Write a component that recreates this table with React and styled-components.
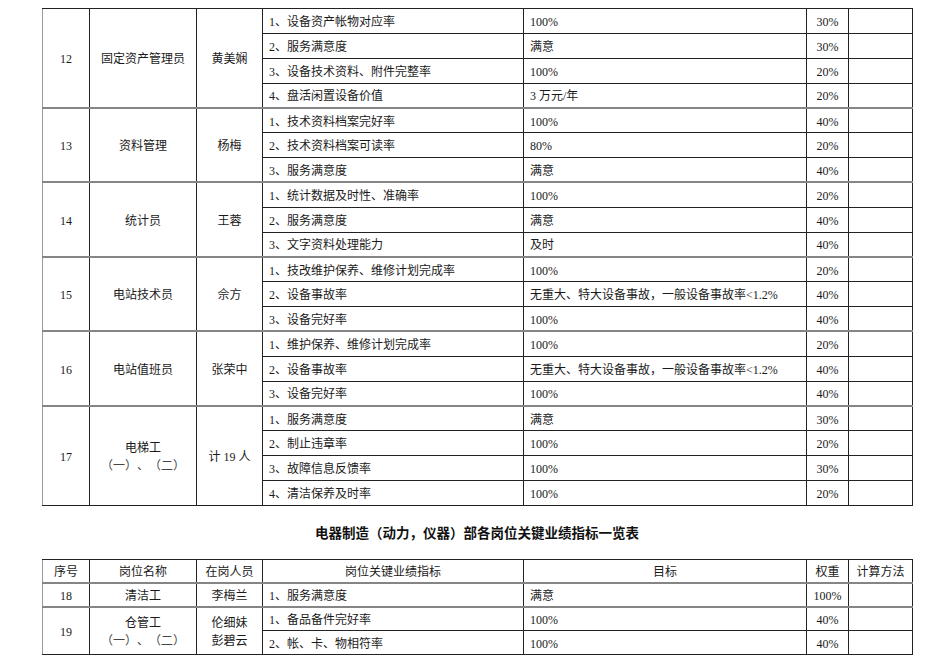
import React from "react";
import styled, { createGlobalStyle } from "styled-components";

const Global = createGlobalStyle`
  html, body { margin: 0; padding: 0; background: #fff; }
  body {
    font-family: "Liberation Serif", "Noto Sans CJK SC", serif;
    color: #1a1a1a;
    text-spacing-trim: space-all;
  }
`;

const Page = styled.div`
  width: 950px;
  padding: 8px 0 0 42px;
  box-sizing: border-box;
`;

const Table = styled.table`
  width: 870px;
  table-layout: fixed;
  border-collapse: collapse;
  font-size: 12px;
  border-left: 1px solid #9a9a9a;
  border-bottom: 1px solid #9a9a9a;
`;

const Row = styled.tr`
  height: ${(p) => p.$h || 24.85}px;
  & > td {
    border-top: ${(p) => (p.$group ? "2px solid #858585" : "1px solid #222")};
  }
`;

const Cell = styled.td`
  border: 1px solid #222;
  padding: 2px 6px 0;
  text-align: ${(p) => (p.$left ? "left" : "center")};
  vertical-align: middle;
  line-height: 1.5;
  white-space: nowrap;
  overflow: hidden;
  &:first-child { border-left: 1px solid #9a9a9a; }
`;

const Sub = styled.span`
  display: block;
  color: ${(p) => (p.$plain ? "#1a1a1a" : "#444")};
  text-spacing-trim: space-all;
`;

const Title = styled.h2`
  margin: 0;
  height: 53px;
  width: 870px;
  display: flex;
  align-items: center;
  justify-content: center;
  font-family: "Noto Sans CJK SC", "Liberation Sans", sans-serif;
  font-size: 13.5px;
  font-weight: 700;
  color: #111;
  text-spacing-trim: space-all;
`;

const Cols = () => (
  <colgroup>
    <col style={{ width: 47 }} />
    <col style={{ width: 107 }} />
    <col style={{ width: 66 }} />
    <col style={{ width: 261 }} />
    <col style={{ width: 283 }} />
    <col style={{ width: 42 }} />
    <col style={{ width: 64 }} />
  </colgroup>
);

const groups = [
  {
    no: "12", name: ["固定资产管理员"], staff: ["黄美娴"],
    items: [
      ["1、设备资产帐物对应率", "100%", "30%"],
      ["2、服务满意度", "满意", "30%"],
      ["3、设备技术资料、附件完整率", "100%", "20%"],
      ["4、盘活闲置设备价值", "3 万元/年", "20%"],
    ],
  },
  {
    no: "13", name: ["资料管理"], staff: ["杨梅"],
    items: [
      ["1、技术资料档案完好率", "100%", "40%"],
      ["2、技术资料档案可读率", "80%", "20%"],
      ["3、服务满意度", "满意", "40%"],
    ],
  },
  {
    no: "14", name: ["统计员"], staff: ["王蓉"],
    items: [
      ["1、统计数据及时性、准确率", "100%", "20%"],
      ["2、服务满意度", "满意", "40%"],
      ["3、文字资料处理能力", "及时", "40%"],
    ],
  },
  {
    no: "15", name: ["电站技术员"], staff: ["佘方"],
    items: [
      ["1、技改维护保养、维修计划完成率", "100%", "20%"],
      ["2、设备事故率", "无重大、特大设备事故，一般设备事故率<1.2%", "40%"],
      ["3、设备完好率", "100%", "40%"],
    ],
  },
  {
    no: "16", name: ["电站值班员"], staff: ["张荣中"],
    items: [
      ["1、维护保养、维修计划完成率", "100%", "20%"],
      ["2、设备事故率", "无重大、特大设备事故，一般设备事故率<1.2%", "40%"],
      ["3、设备完好率", "100%", "40%"],
    ],
  },
  {
    no: "17", name: ["电梯工", "（一）、（二）"], staff: ["计 19 人"],
    items: [
      ["1、服务满意度", "满意", "30%"],
      ["2、制止违章率", "100%", "20%"],
      ["3、故障信息反馈率", "100%", "30%"],
      ["4、清洁保养及时率", "100%", "20%"],
    ],
  },
];

const groups2 = [
  {
    no: "18", name: ["清洁工"], staff: ["李梅兰"],
    items: [["1、服务满意度", "满意", "100%"]],
  },
  {
    no: "19", name: ["仓管工", "（一）、（二）"], staff: ["伦细妹", "彭碧云"], staffPlain: true,
    items: [
      ["1、备品备件完好率", "100%", "40%"],
      ["2、帐、卡、物相符率", "100%", "40%"],
    ],
  },
];

const Lines = ({ lines, plain }) =>
  lines.length === 1 ? (
    lines[0]
  ) : (
    <>
      {lines[0]}
      {lines.slice(1).map((l, i) => (
        <Sub key={i} $plain={plain}>{l}</Sub>
      ))}
    </>
  );

const GroupRows = ({ g, first, h }) =>
  g.items.map((it, i) => (
    <Row key={g.no + i} $group={i === 0 && !first} $h={h}>
      {i === 0 && (
        <>
          <Cell rowSpan={g.items.length}>{g.no}</Cell>
          <Cell rowSpan={g.items.length}>
            <Lines lines={g.name} />
          </Cell>
          <Cell rowSpan={g.items.length}>
            <Lines lines={g.staff} plain={g.staffPlain} />
          </Cell>
        </>
      )}
      <Cell $left>{it[0]}</Cell>
      <Cell $left>{it[1]}</Cell>
      <Cell>{it[2]}</Cell>
      <Cell />
    </Row>
  ));

export default function App() {
  return (
    <Page>
      <Global />
      <Table>
        <Cols />
        <tbody>
          {groups.map((g, gi) => (
            <GroupRows key={g.no} g={g} first={gi === 0} />
          ))}
        </tbody>
      </Table>
      <Title>电器制造（动力，仪器）部各岗位关键业绩指标一览表</Title>
      <Table>
        <Cols />
        <tbody>
          <Row $h={24}>
            <Cell>序号</Cell>
            <Cell>岗位名称</Cell>
            <Cell>在岗人员</Cell>
            <Cell>岗位关键业绩指标</Cell>
            <Cell>目标</Cell>
            <Cell>权重</Cell>
            <Cell>计算方法</Cell>
          </Row>
          {groups2.map((g) => (
            <GroupRows key={g.no} g={g} first={false} h={23.7} />
          ))}
        </tbody>
      </Table>
    </Page>
  );
}
